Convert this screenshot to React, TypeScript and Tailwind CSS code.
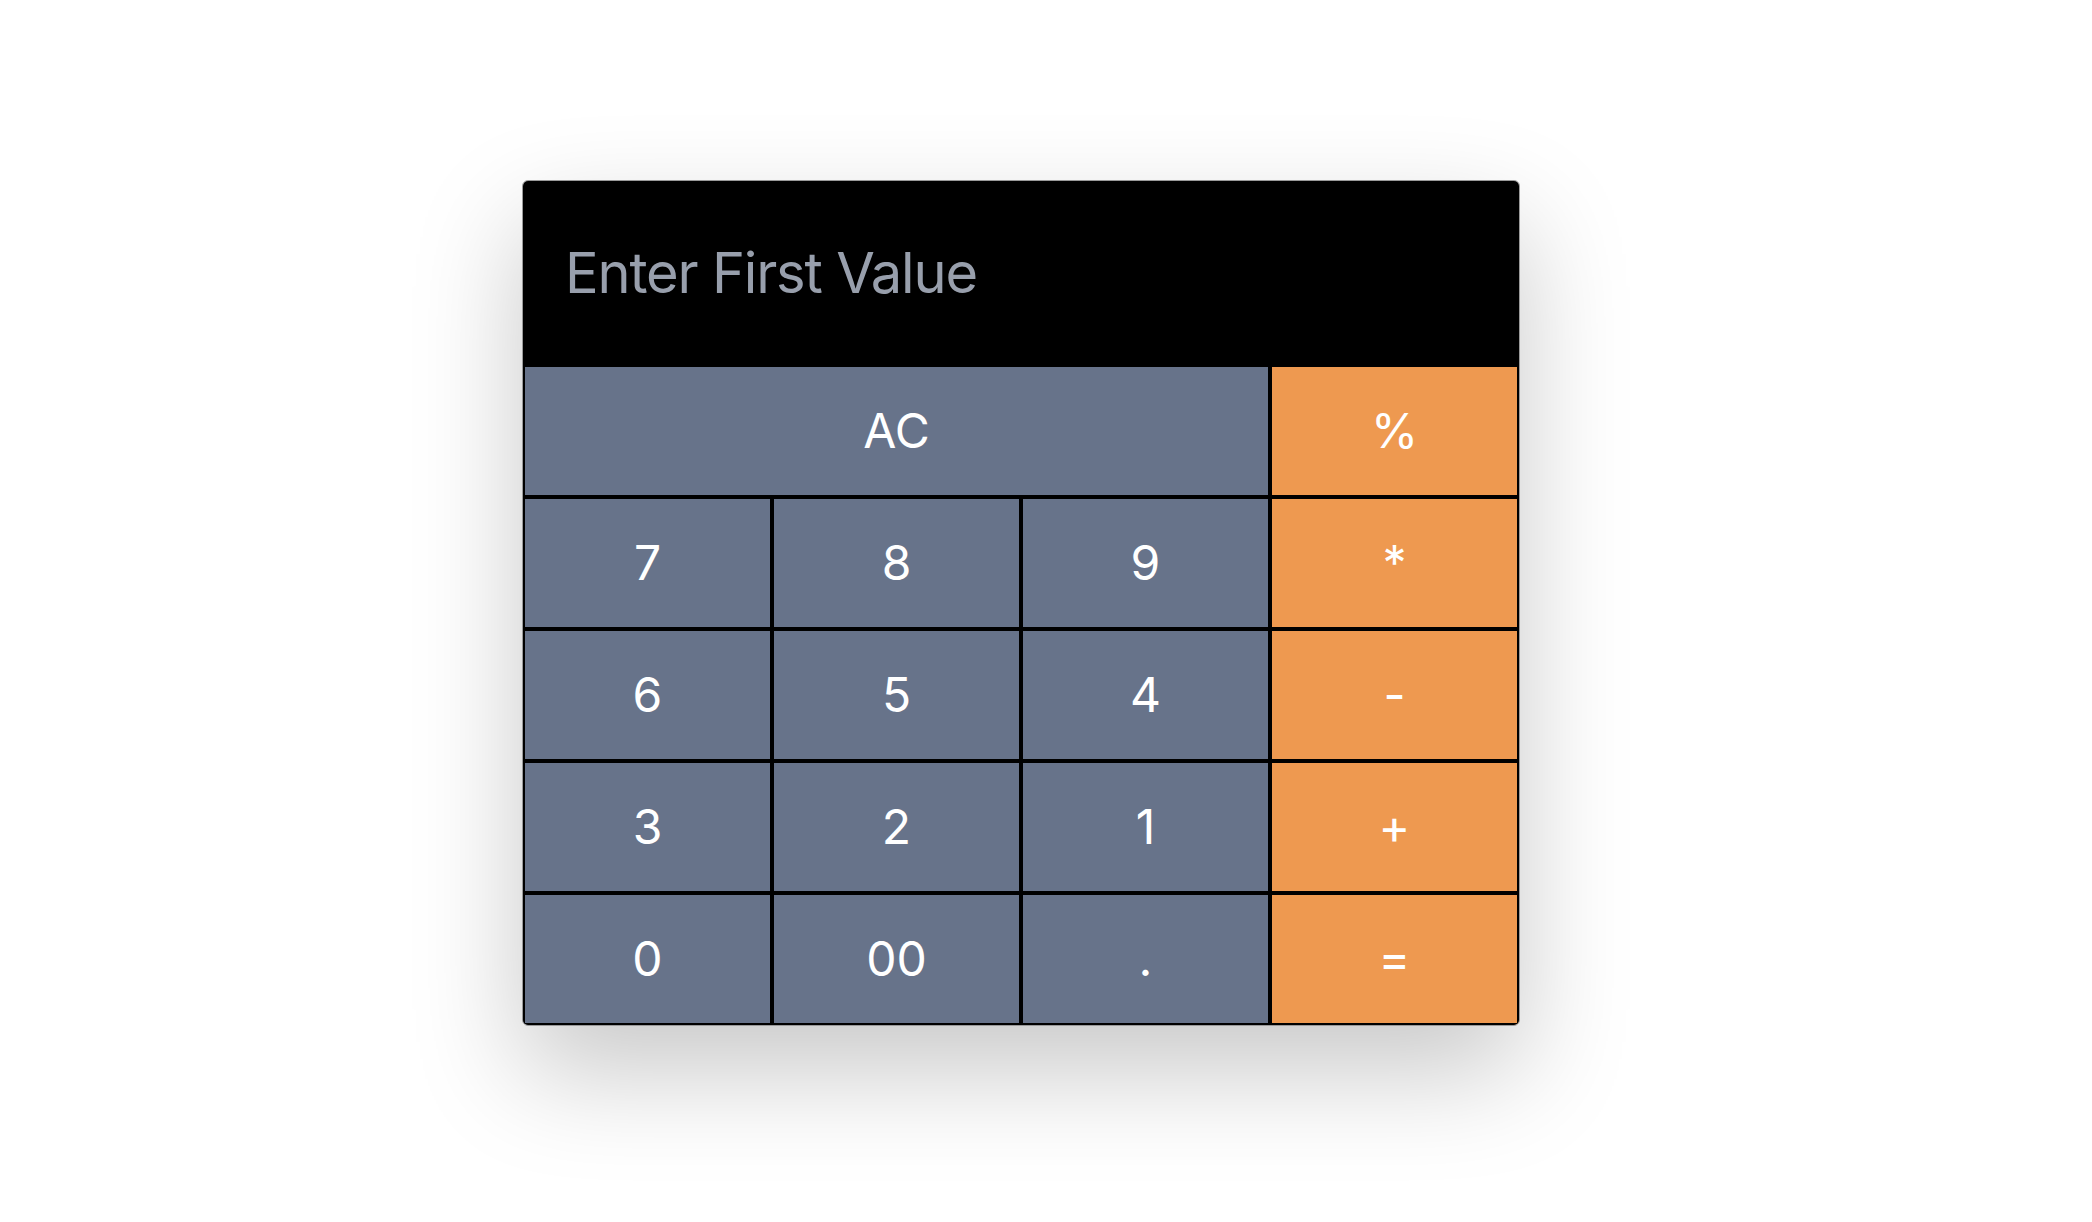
const KEYS: { label: string; kind: "num" | "op"; span?: boolean }[] = [
  { label: "AC", kind: "num", span: true },
  { label: "%", kind: "op" },
  { label: "7", kind: "num" },
  { label: "8", kind: "num" },
  { label: "9", kind: "num" },
  { label: "*", kind: "op" },
  { label: "6", kind: "num" },
  { label: "5", kind: "num" },
  { label: "4", kind: "num" },
  { label: "-", kind: "op" },
  { label: "3", kind: "num" },
  { label: "2", kind: "num" },
  { label: "1", kind: "num" },
  { label: "+", kind: "op" },
  { label: "0", kind: "num" },
  { label: "00", kind: "num" },
  { label: ".", kind: "num" },
  { label: "=", kind: "op" },
];

export default function App() {
  return (
    <div
      className="min-h-[1222px] w-full bg-white pl-[522px] pt-[180px]"
      style={{ fontFamily: "Inter, 'Noto Sans', sans-serif" }}
    >
      <div className="w-[998px] overflow-hidden rounded-md border border-[#9a9a9a] shadow-[0_45px_110px_rgba(0,0,0,0.22)]">
        {/* Display */}
        <div className="flex h-[184px] items-center bg-black pl-[42px]">
          <input
            readOnly
            placeholder="Enter First Value"
            className="w-full bg-transparent text-[56px] tracking-[-0.021em] text-white outline-none placeholder:text-[#989fac]"
          />
        </div>

        {/* Keypad */}
        <div className="grid grid-cols-4">
          {KEYS.map((k) => (
            <button
              key={k.label}
              className={[
                "flex h-[132px] items-center justify-center border-2 border-black text-[48px] text-white",
                k.span ? "col-span-3" : "",
                k.kind === "op" ? "bg-[#ee9950]" : "bg-[#67738a]",
              ].join(" ")}
            >
              {k.label}
            </button>
          ))}
        </div>
      </div>
    </div>
  );
}
